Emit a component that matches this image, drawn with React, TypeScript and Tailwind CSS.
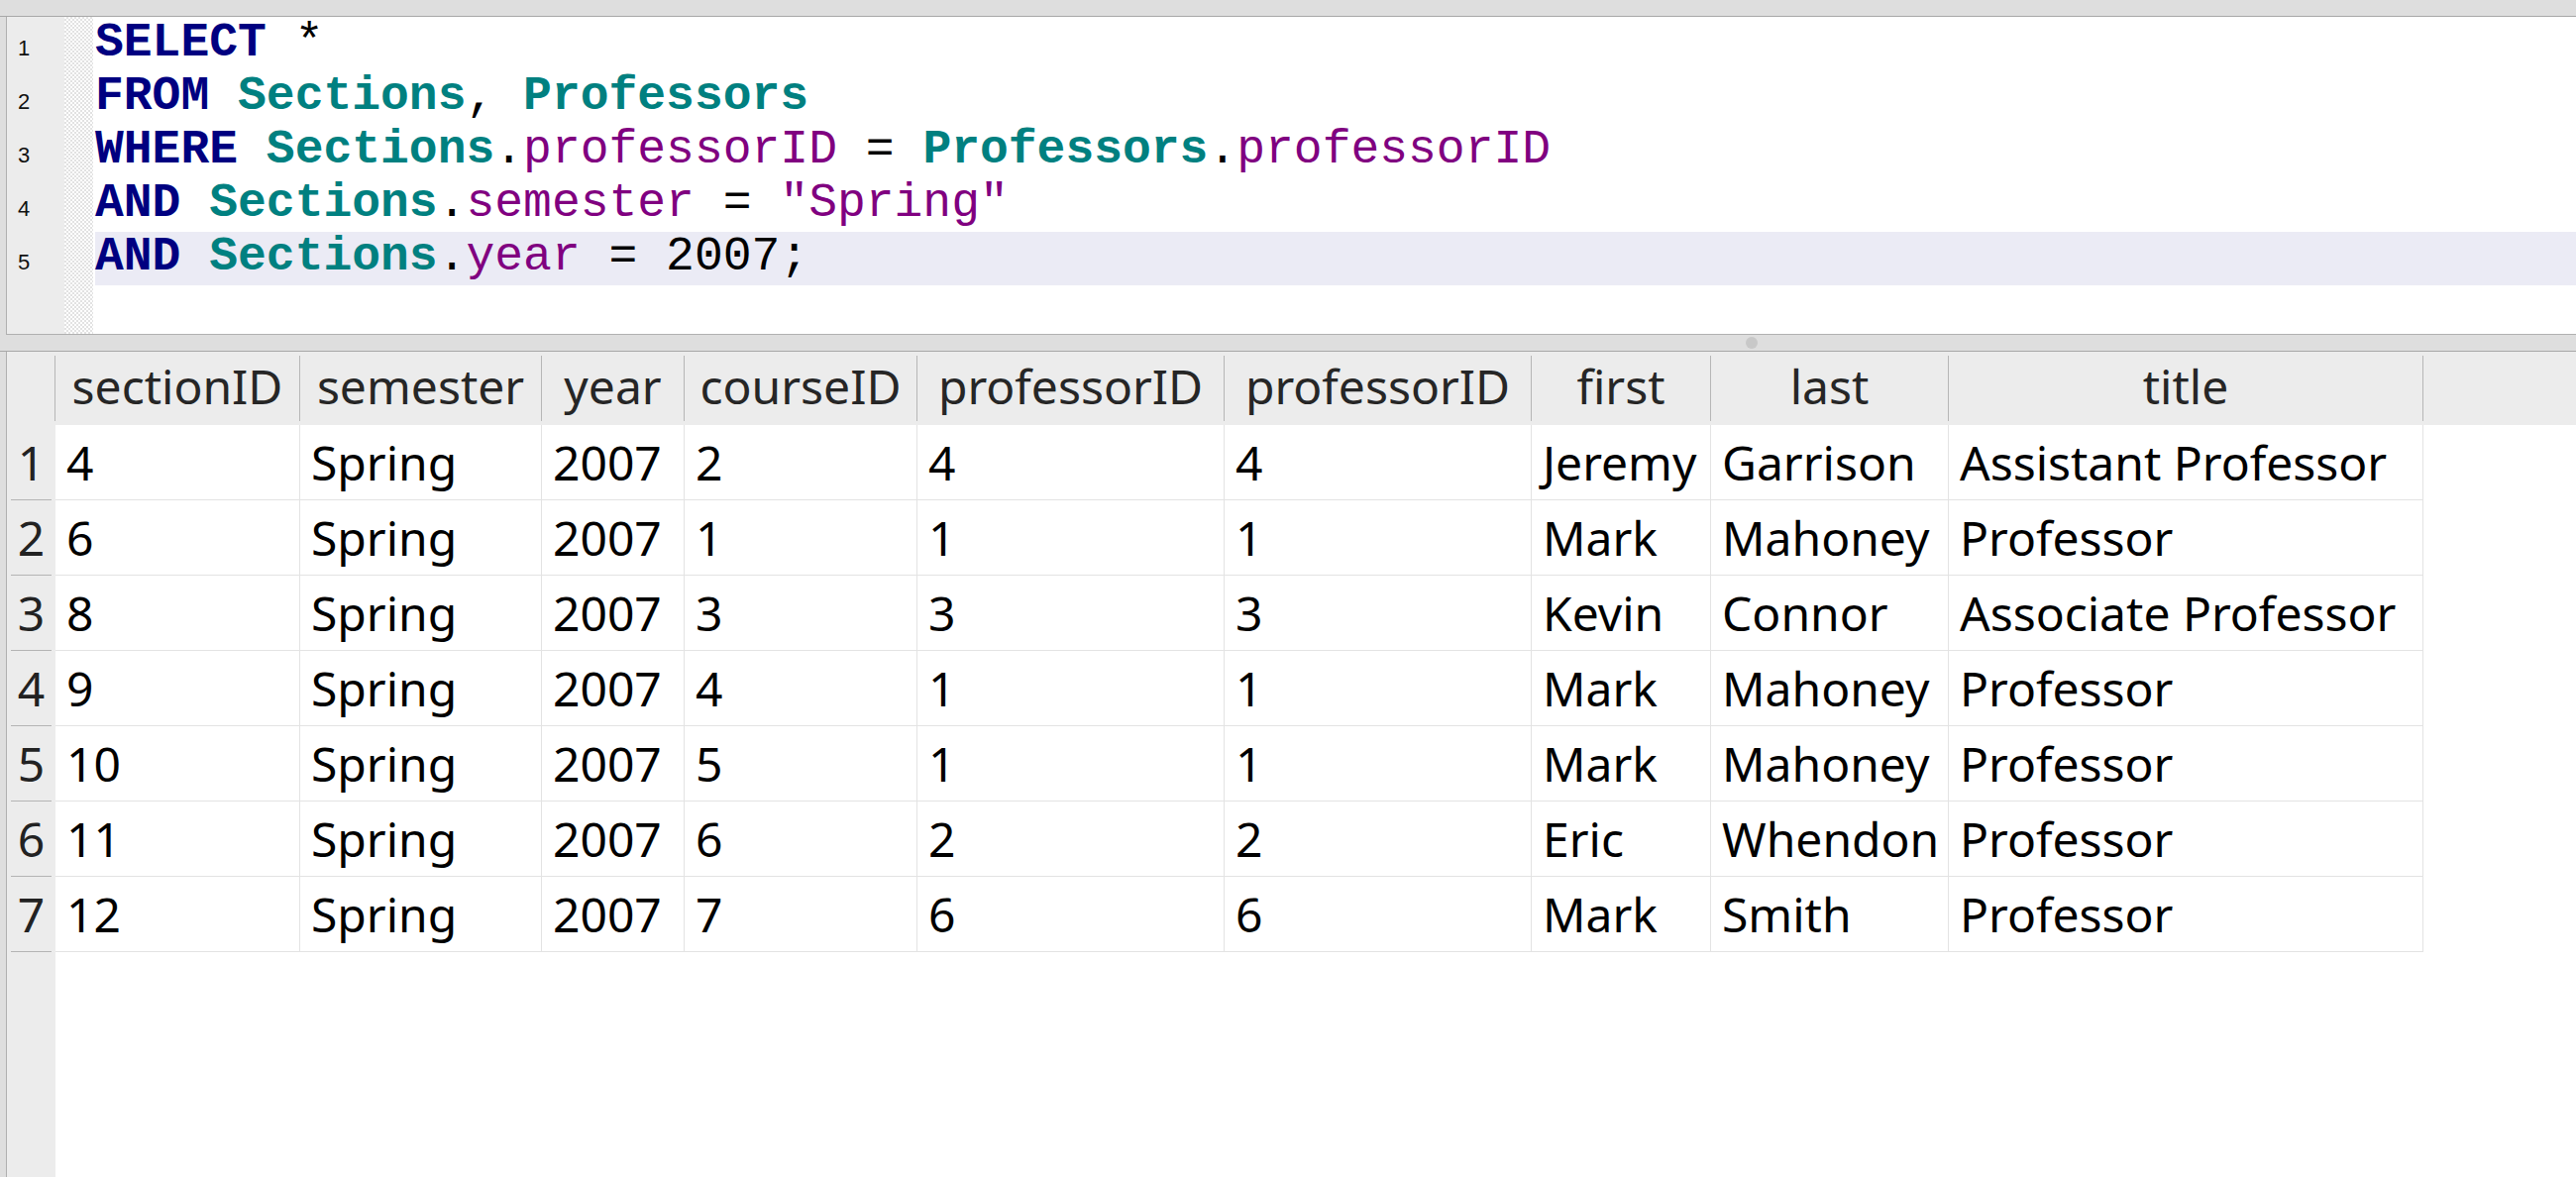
import React from "react";

type Tok = { t: string; k: "kw" | "tb" | "col" | "p" };

const code: Tok[][] = [
  [
    { t: "SELECT", k: "kw" },
    { t: " *", k: "p" },
  ],
  [
    { t: "FROM", k: "kw" },
    { t: " ", k: "p" },
    { t: "Sections", k: "tb" },
    { t: ", ", k: "p" },
    { t: "Professors", k: "tb" },
  ],
  [
    { t: "WHERE", k: "kw" },
    { t: " ", k: "p" },
    { t: "Sections", k: "tb" },
    { t: ".", k: "p" },
    { t: "professorID", k: "col" },
    { t: " = ", k: "p" },
    { t: "Professors", k: "tb" },
    { t: ".", k: "p" },
    { t: "professorID", k: "col" },
  ],
  [
    { t: "AND", k: "kw" },
    { t: " ", k: "p" },
    { t: "Sections", k: "tb" },
    { t: ".", k: "p" },
    { t: "semester", k: "col" },
    { t: " = ", k: "p" },
    { t: '"Spring"', k: "col" },
  ],
  [
    { t: "AND", k: "kw" },
    { t: " ", k: "p" },
    { t: "Sections", k: "tb" },
    { t: ".", k: "p" },
    { t: "year", k: "col" },
    { t: " = 2007;", k: "p" },
  ],
];

const tokCls: Record<Tok["k"], string> = {
  kw: "text-[#000080] font-bold",
  tb: "text-[#008080] font-bold",
  col: "text-[#800080]",
  p: "text-black",
};

const cols = [
  { h: "sectionID", w: "w-[247px]" },
  { h: "semester", w: "w-[244px]" },
  { h: "year", w: "w-[144px]" },
  { h: "courseID", w: "w-[235px]" },
  { h: "professorID", w: "w-[310px]" },
  { h: "professorID", w: "w-[310px]" },
  { h: "first", w: "w-[181px]" },
  { h: "last", w: "w-[240px]" },
  { h: "title", w: "w-[479px]" },
];

const rows = [
  ["4", "Spring", "2007", "2", "4", "4", "Jeremy", "Garrison", "Assistant Professor"],
  ["6", "Spring", "2007", "1", "1", "1", "Mark", "Mahoney", "Professor"],
  ["8", "Spring", "2007", "3", "3", "3", "Kevin", "Connor", "Associate Professor"],
  ["9", "Spring", "2007", "4", "1", "1", "Mark", "Mahoney", "Professor"],
  ["10", "Spring", "2007", "5", "1", "1", "Mark", "Mahoney", "Professor"],
  ["11", "Spring", "2007", "6", "2", "2", "Eric", "Whendon", "Professor"],
  ["12", "Spring", "2007", "7", "6", "6", "Mark", "Smith", "Professor"],
];

const sans = "font-['Noto_Sans','Open_Sans',sans-serif]";

export default function App() {
  return (
    <div className="w-[2600px] h-[1188px] bg-[#dedede] flex flex-col overflow-hidden">
      {/* top bar */}
      <div className="h-[17px] flex-none border-b border-[#a8a8a8]" />

      {/* editor */}
      <div className="h-[321px] flex-none pl-[6px] flex">
        <div className="flex-1 flex border-l border-b border-[#b0b0b0]">
          <div className="w-[58px] flex-none bg-[#ececec] pt-[1px] font-['Liberation_Sans',Arial,sans-serif] text-[22px] text-[#111]">
            {code.map((_, i) => (
              <div key={i} className="h-[54px] pl-[11px] pt-[6px] leading-[49px]">
                {i + 1}
              </div>
            ))}
          </div>
          <div className="w-[29px] flex-none bg-[repeating-conic-gradient(#e2e2e2_0%_25%,#ffffff_0%_50%)] bg-[length:4px_4px]" />
          <div className="flex-1 bg-white pt-[1px] font-['Liberation_Mono','Courier_New',monospace] text-[48px]">
            {code.map((line, i) => (
              <div
                key={i}
                className={`h-[54px] ml-[2px] leading-[50px] whitespace-pre ${i === 4 ? "bg-[#ebebf5]" : ""}`}
              >
                {line.map((tk, j) => (
                  <span key={j} className={tokCls[tk.k]}>
                    {tk.t}
                  </span>
                ))}
              </div>
            ))}
          </div>
        </div>
      </div>

      {/* divider */}
      <div className="h-[17px] flex-none border-b border-[#a8a8a8] flex items-center pl-[1762px]">
        <div className="w-[12px] h-[12px] rounded-full bg-[#c8c8c8]" />
      </div>

      {/* table */}
      <div className="flex-1 pl-[6px] flex">
        <div className={`flex-1 border-l border-[#b0b0b0] flex flex-col ${sans}`}>
          {/* header */}
          <div className="h-[74px] flex-none bg-[#ececec] flex items-center">
            <div className="w-[49px] flex-none flex items-center justify-end">
              <div className="w-px h-[66px] bg-[#b6b6b6]" />
            </div>
            {cols.map((c, i) => (
              <div key={i} className={`${c.w} flex-none flex items-center`}>
                <div className="flex-1 text-center text-[48px] text-[#262626] leading-none pb-[4px]">{c.h}</div>
                <div className="w-px h-[66px] bg-[#b6b6b6]" />
              </div>
            ))}
          </div>
          {/* body */}
          <div className="flex-1 flex">
            <div className="w-[49px] flex-none bg-[#ececec] flex flex-col">
              {rows.map((_, i) => (
                <div key={i} className="h-[76px] flex flex-col">
                  <div className="flex-1 flex items-center justify-center text-[48px] text-[#222]">{i + 1}</div>
                  <div className="h-px mx-[4px] bg-[#b4b4b4]" />
                </div>
              ))}
            </div>
            <div className="flex-1 bg-white flex flex-col">
              {rows.map((r, i) => (
                <div key={i} className="h-[76px] flex">
                  {r.map((v, j) => (
                    <div
                      key={j}
                      className={`${cols[j].w} flex-none border-r border-b border-[#e3e3e3] flex items-center pl-[11px] text-[48px] text-black whitespace-nowrap overflow-hidden`}
                    >
                      {v}
                    </div>
                  ))}
                </div>
              ))}
            </div>
          </div>
        </div>
      </div>
    </div>
  );
}
